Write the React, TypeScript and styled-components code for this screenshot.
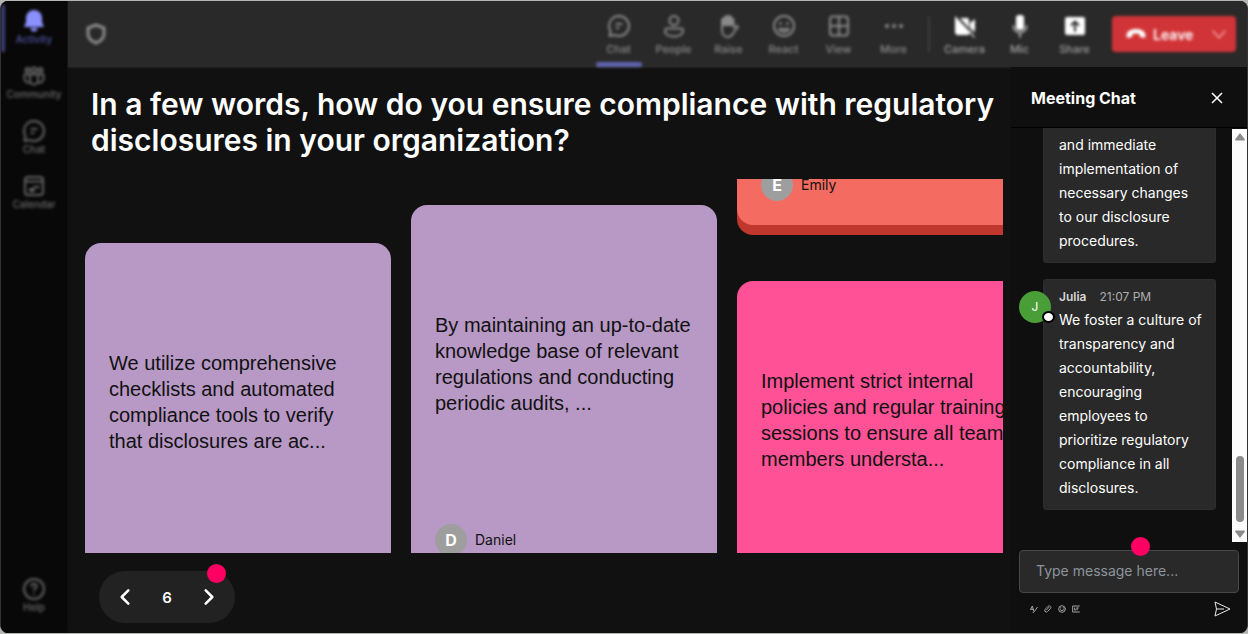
import React from "react";
import styled, { createGlobalStyle } from "styled-components";

const GlobalStyle = createGlobalStyle`
  *, *::before, *::after { box-sizing: border-box; }
  body {
    margin: 0;
    background: #b4b6b4;
    font-family: Inter, "Liberation Sans", sans-serif;
    color: #fff;
  }
  button, input { font: inherit; color: inherit; }
  button { border: 0; padding: 0; background: none; cursor: pointer; }
  h1, h2, p { margin: 0; }
  svg { display: block; flex: none; }
`;

const Shell = styled.div`
  display: flex;
  height: calc(100vh - 2px);
  min-height: 480px;
  margin: 1px 0;
  border: solid #333;
  border-width: 0 1px;
  border-radius: 8px;
  overflow: hidden;
  background: #111;
`;

/* ---------- left rail ---------- */

const Rail = styled.nav`
  flex: none;
  width: 66px;
  display: flex;
  flex-direction: column;
  padding: 4px 0 5px;
  background: #080808;
  box-shadow: 0 0 3px #080808;
`;

const RailButton = styled.button<{ $active?: boolean }>`
  position: relative;
  height: 55px;
  display: flex;
  flex-direction: column;
  align-items: center;
  padding-top: 4px;
  font-size: 10px;
  line-height: 12px;
  font-weight: 500;
  color: ${(p) => (p.$active ? "#5154a8" : "#6c6c6c")};
  filter: blur(1.4px);
  svg { color: ${(p) => (p.$active ? "#8b90ff" : "#646464")}; }
  &::before {
    content: "";
    position: absolute;
    left: 0;
    top: 0;
    width: 4px;
    height: 47px;
    background: ${(p) => (p.$active ? "#3d3e78" : "transparent")};
  }
`;

const Spacer = styled.div`
  flex: 1;
`;

/* ---------- top bar ---------- */

const Main = styled.div`
  flex: 1;
  min-width: 0;
  display: flex;
  flex-direction: column;
`;

const TopBar = styled.header`
  flex: none;
  height: 66px;
  display: flex;
  align-items: center;
  margin-left: 1px;
  padding: 0 11px 0 16px;
  background: #292929;
  box-shadow: 0 1px 2px #222;
`;

const Soft = styled.div`
  display: flex;
  align-items: center;
  color: #8c8c8c;
  filter: blur(1.4px);
`;

const ToolButton = styled.button<{ $bright?: boolean; $active?: boolean }>`
  width: 55px;
  height: 66px;
  display: flex;
  flex-direction: column;
  align-items: center;
  padding-top: 13px;
  gap: 4px;
  font-size: 11px;
  line-height: 14px;
  font-weight: 500;
  color: ${(p) => (p.$bright ? "#a0a0a0" : "#8a8a8a")};
  svg { color: ${(p) => (p.$bright ? "#ffffff" : "#8a8a8a")}; }
  &::after {
    content: "";
    width: 46px;
    height: 5px;
    margin-top: 2px;
    border-radius: 2px;
    background: ${(p) => (p.$active ? "#6264b0" : "transparent")};
  }
`;

const Divider = styled.span`
  width: 2px;
  height: 36px;
  margin: 0 7px;
  background: #3f3f3f;
`;

const LeaveGroup = styled.div`
  display: flex;
  height: 36px;
  margin-left: 10px;
  border-radius: 4px;
  background: #d13438;
  color: #fff;
`;

const LeaveButton = styled.button`
  display: flex;
  align-items: center;
  gap: 7px;
  width: 90px;
  padding-left: 14px;
  font-size: 14px;
  font-weight: 600;
`;

const LeaveMenu = styled.button`
  width: 34px;
  display: flex;
  align-items: center;
  justify-content: center;
  color: #f0a4a6;
`;

/* ---------- stage ---------- */

const Body = styled.div`
  flex: 1;
  min-height: 0;
  display: flex;
`;

const Stage = styled.main`
  flex: 1;
  min-width: 0;
  display: flex;
  flex-direction: column;
  padding: 19px 8px 10px 18px;
`;

const Question = styled.h1`
  padding-left: 6px;
  font-size: 30px;
  line-height: 36px;
  font-weight: 600;
`;

const Board = styled.section`
  flex: 1;
  min-height: 0;
  display: flex;
  gap: 20px;
  margin-top: 21px;
  overflow: hidden;
`;

const Column = styled.div<{ $shift: number }>`
  flex: none;
  width: 306px;
  display: flex;
  flex-direction: column;
  gap: 56px;
  margin-top: ${(p) => p.$shift}px;
`;

const Card = styled.article<{ $face: string; $edge: string; $height: number }>`
  flex: none;
  height: ${(p) => p.$height}px;
  display: flex;
  flex-direction: column;
  padding: 24px;
  border-radius: 16px;
  background: ${(p) => p.$face};
  box-shadow: 0 10px 0 ${(p) => p.$edge};
  color: #111;
`;

const CardText = styled.p`
  flex: 1;
  display: flex;
  align-items: center;
  padding-bottom: 26px;
  font-family: "Liberation Sans", Arial, sans-serif;
  font-size: 20px;
  line-height: 26px;
`;

const Author = styled.footer`
  display: flex;
  align-items: center;
  gap: 8px;
  font-size: 14px;
  line-height: 16px;
`;

const Initial = styled.span`
  width: 32px;
  height: 32px;
  display: flex;
  align-items: center;
  justify-content: center;
  border-radius: 50%;
  background: #9e9e9e;
  color: #fff;
  font-size: 16px;
  font-weight: 700;
`;

const Pager = styled.div`
  position: relative;
  align-self: flex-start;
  display: flex;
  align-items: center;
  justify-content: space-between;
  width: 136px;
  height: 52px;
  margin: 18px 0 0 14px;
  padding: 0 16px;
  border-radius: 26px;
  background: #222;
  font-size: 15px;
  font-weight: 600;
`;

const Hotspot = styled.span<{ $top: number; $right: number }>`
  position: absolute;
  top: ${(p) => p.$top}px;
  right: ${(p) => p.$right}px;
  width: 19px;
  height: 19px;
  border-radius: 50%;
  background: #ff0062;
`;

/* ---------- chat ---------- */

const Chat = styled.aside`
  flex: none;
  width: 236px;
  display: flex;
  flex-direction: column;
  background: #0f0f0f;
`;

const ChatHeader = styled.div`
  flex: none;
  height: 61px;
  display: flex;
  align-items: center;
  justify-content: space-between;
  padding: 2px 24px 0 20px;
  border-bottom: 1px solid #000;
`;

const ChatTitle = styled.h2`
  font-size: 16px;
  line-height: 24px;
  font-weight: 700;
`;

const ChatBody = styled.div`
  flex: 1;
  min-height: 0;
  display: flex;
`;

const Messages = styled.div`
  flex: 1;
  min-width: 0;
  display: flex;
  flex-direction: column;
  justify-content: flex-end;
  gap: 16px;
  padding: 0 16px 32px 32px;
  overflow: hidden;
`;

const Bubble = styled.div`
  position: relative;
  flex: none;
  padding: 7px 12px 10px 16px;
  border-radius: 4px;
  background: #292929;
  box-shadow: inset 0 0 0 1px #2d2d2d;
  font-size: 14px;
  line-height: 24px;
`;

const Meta = styled.div`
  display: flex;
  gap: 13px;
  line-height: 22px;
  font-size: 12px;
  color: #adadad;
  strong { font-weight: 600; color: #d6d6d6; }
`;

const Avatar = styled.span`
  position: absolute;
  left: -24px;
  top: 12px;
  width: 32px;
  height: 32px;
  display: flex;
  align-items: center;
  justify-content: center;
  border-radius: 50%;
  background: #4a9e38;
  font-size: 12px;
  &::after {
    content: "";
    position: absolute;
    right: -4px;
    bottom: 0;
    width: 13px;
    height: 12px;
    border: 2px solid #000;
    border-radius: 50%;
    background: #fff;
  }
`;

const ScrollTrack = styled.div`
  flex: none;
  width: 15px;
  display: flex;
  flex-direction: column;
  align-items: center;
  justify-content: space-between;
  margin-top: 1px;
  padding: 4px 0;
  background: #fcfcfc;
  color: #8b8b8b;
`;

const ScrollThumb = styled.div`
  width: 8px;
  height: 66px;
  margin: auto 0 8px;
  border-radius: 4px;
  background: #8b8b8b;
`;

const Composer = styled.form`
  position: relative;
  flex: none;
  padding: 8px 8px 16px;
`;

const MessageInput = styled.input`
  display: block;
  width: 100%;
  height: 43px;
  padding: 0 16px 2px;
  border: 1px solid #474747;
  border-radius: 4px;
  outline: 0;
  background: #292929;
  font-size: 14px;
  &::placeholder { color: #8d949c; opacity: 1; }
`;

const Tools = styled.div`
  display: flex;
  align-items: center;
  gap: 6px;
  padding: 8px 8px 0 11px;
  color: #a3a3a3;
`;

const SendButton = styled.button`
  margin-left: auto;
  color: #e8e8e8;
`;

/* ---------- icons ---------- */

type IconProps = { size?: number; children: React.ReactNode; width?: number };

const Icon = ({ size = 24, width = 2, children }: IconProps) => (
  <svg
    width={size}
    height={size}
    viewBox="0 0 24 24"
    fill="none"
    stroke="currentColor"
    strokeWidth={width}
    strokeLinecap="round"
    strokeLinejoin="round"
    aria-hidden="true"
  >
    {children}
  </svg>
);

const BellIcon = () => (
  <Icon>
    <path d="M12 1a8 8 0 0 0-8 8v4l-2 5h20l-2-5V9a8 8 0 0 0-8-8z" fill="currentColor" stroke="none" />
    <path d="M8.500 19a3.500 3.500 0 0 0 7 0z" fill="currentColor" stroke="none" />
  </Icon>
);
const CommunityIcon = () => (
  <Icon>
    <circle cx="12" cy="6" r="2.500" />
    <circle cx="5.500" cy="6" r="2" />
    <circle cx="18.500" cy="6" r="2" />
    <path d="M8 10.500h8v6a4 4 0 0 1-8 0zM8 10.500H2.500v4a4 4 0 0 0 5 4M16 10.500h5.500v4a4 4 0 0 1-5 4" />
  </Icon>
);
const ChatIcon = () => (
  <Icon>
    <path d="M12 2a10 10 0 0 1 0 20 10 10 0 0 1-4.600-1.100L2.500 22l1-4.800A10 10 0 0 1 12 2z" />
    <path d="M9.500 10h5M9.500 14h2" />
  </Icon>
);
const CalendarIcon = () => (
  <Icon>
    <rect x="3" y="3" width="18" height="18" rx="3" />
    <path d="M3 7.500h18M8 15h3l2-2h4M8 17h4" />
  </Icon>
);
const HelpIcon = () => (
  <Icon>
    <circle cx="12" cy="12" r="10" />
    <path d="M9.500 9a2.500 2.500 0 1 1 3.500 2.500c-.7.400-1 .9-1 1.800M12 17v.1" />
  </Icon>
);
const PeopleIcon = () => (
  <Icon>
    <circle cx="12" cy="6.500" r="4.500" />
    <path d="M5 14.500h14a2 2 0 0 1 2 2c0 4-4 6-9 6s-9-2-9-6a2 2 0 0 1 2-2z" />
  </Icon>
);
const RaiseIcon = () => (
  <Icon>
    <path d="M5 11V6a1.500 1.500 0 0 1 3 0V3.500a1.500 1.500 0 0 1 3 0 1.500 1.500 0 0 1 3 0V5a1.500 1.500 0 0 1 2.500 1v5z" fill="currentColor" />
    <path d="M5 10v6c0 4 2 7 5.500 7 3.500 0 5-2 6.500-5l4-5c-1-2-3-1-4.500 1" />
  </Icon>
);
const ReactIcon = () => (
  <Icon>
    <circle cx="12" cy="12" r="10" />
    <path d="M8.500 9.500v.1M15.500 9.500v.1" strokeWidth={3} />
    <path d="M7 15c2.500 4 7.500 4 10 0z" />
  </Icon>
);
const ViewIcon = () => (
  <Icon>
    <rect x="3" y="2.500" width="18" height="19" rx="3" />
    <path d="M3 12h18M12 3v18" />
  </Icon>
);
const MoreIcon = () => (
  <Icon width={4}>
    <path d="M5 12h.1M12 12h.1M19 12h.1" />
  </Icon>
);
const CameraOffIcon = () => (
  <Icon>
    <path d="M7 4h7a2 2 0 0 1 2 2v9l6 6M2 2l15 16a3 3 0 0 1-2 3H5a3 3 0 0 1-3-3V3z" fill="currentColor" stroke="none" />
    <path d="M17 9l5-4v13l-5-4z" fill="currentColor" stroke="none" />
    <path d="M17 18l4 5" opacity=".6" />
  </Icon>
);
const MicIcon = () => (
  <Icon>
    <rect x="8" y="1" width="8" height="15" rx="3" fill="currentColor" stroke="none" />
    <path d="M5.500 12a6.500 6.500 0 0 0 13 0M12 19v4" opacity=".6" />
  </Icon>
);
const ShareIcon = () => (
  <Icon>
    <rect x="2" y="3" width="20" height="18" rx="2" fill="currentColor" stroke="none" />
    <path d="M12 17V8M8.500 11 12 7.500l3.500 3.500" stroke="#292929" />
  </Icon>
);
const ShieldIcon = () => (
  <Icon width={3}>
    <path d="M12 3l8 3v6c0 4-3 7-8 9-5-2-8-5-8-9V6z" />
  </Icon>
);

const railItems = [
  { label: "Activity", icon: <BellIcon />, active: true },
  { label: "Community", icon: <CommunityIcon /> },
  { label: "Chat", icon: <ChatIcon /> },
  { label: "Calendar", icon: <CalendarIcon /> },
];

const tools = [
  { label: "Chat", icon: <ChatIcon />, active: true },
  { label: "People", icon: <PeopleIcon /> },
  { label: "Raise", icon: <RaiseIcon /> },
  { label: "React", icon: <ReactIcon /> },
  { label: "View", icon: <ViewIcon /> },
  { label: "More", icon: <MoreIcon /> },
];

const devices = [
  { label: "Camera", icon: <CameraOffIcon /> },
  { label: "Mic", icon: <MicIcon /> },
  { label: "Share", icon: <ShareIcon /> },
];

type Answer = { text?: string; author?: string; face: string; edge: string; height: number };

const columns: { shift: number; answers: Answer[] }[] = [
  {
    shift: 64,
    answers: [
      {
        text: "We utilize comprehensive checklists and automated compliance tools to verify that disclosures are ac...",
        face: "#b899c5",
        edge: "#8e6f9c",
        height: 375,
      },
    ],
  },
  {
    shift: 26,
    answers: [
      {
        text: "By maintaining an up-to-date knowledge base of relevant regulations and conducting periodic audits, ...",
        author: "Daniel",
        face: "#b899c5",
        edge: "#8e6f9c",
        height: 375,
      },
    ],
  },
  {
    shift: -289,
    answers: [
      { author: "Emily", face: "#f46c61", edge: "#c0372d", height: 335 },
      {
        text: "Implement strict internal policies and regular training sessions to ensure all team members understa...",
        face: "#ff5296",
        edge: "#c4306a",
        height: 335,
      },
    ],
  },
];

export default function App() {
  return (
    <>
      <GlobalStyle />
      <Shell>
        <Rail aria-label="Apps">
          {railItems.map((item) => (
            <RailButton key={item.label} $active={item.active}>
              {item.icon}
              {item.label}
            </RailButton>
          ))}
          <Spacer />
          <RailButton>
            <HelpIcon />
            Help
          </RailButton>
        </Rail>

        <Main>
          <TopBar>
            <Soft>
              <ShieldIcon />
            </Soft>
            <Spacer />
            <Soft>
              {tools.map((tool) => (
                <ToolButton key={tool.label} $active={tool.active}>
                  {tool.icon}
                  {tool.label}
                </ToolButton>
              ))}
              <Divider />
              {devices.map((tool) => (
                <ToolButton key={tool.label} $bright>
                  {tool.icon}
                  {tool.label}
                </ToolButton>
              ))}
              <LeaveGroup>
                <LeaveButton>
                  <svg width="20" height="14" viewBox="0 0 20 14" fill="currentColor" aria-hidden="true">
                    <path d="M10 2c5 0 9 2 9.500 6 .2 2-.5 3-2 2.700l-2.500-.5c-1-.2-1.500-1-1.400-2L13.500 7c-2-.8-5-.8-7 0l-.1 1.200c.1 1-.4 1.800-1.400 2l-2.500.5C1 11 .3 10 .5 8 1 4 5 2 10 2z" />
                  </svg>
                  Leave
                </LeaveButton>
                <LeaveMenu aria-label="Leave options">
                  <Icon size={18}>
                    <path d="M4 8l8 9 8-9" />
                  </Icon>
                </LeaveMenu>
              </LeaveGroup>
            </Soft>
          </TopBar>

          <Body>
            <Stage>
              <Question>
                In a few words, how do you ensure compliance with regulatory disclosures in your organization?
              </Question>
              <Board>
                {columns.map((column, i) => (
                  <Column key={i} $shift={column.shift}>
                    {column.answers.map((a, j) => (
                      <Card key={j} $face={a.face} $edge={a.edge} $height={a.height}>
                        <CardText>{a.text}</CardText>
                        <Author>
                          <Initial>{a.author?.[0]}</Initial>
                          {a.author}
                        </Author>
                      </Card>
                    ))}
                  </Column>
                ))}
              </Board>
              <Pager>
                <button aria-label="Previous">
                  <Icon size={20} width={3}>
                    <path d="M16 4 8 12l8 8" />
                  </Icon>
                </button>
                6
                <button aria-label="Next">
                  <Icon size={20} width={3}>
                    <path d="M8 4l8 8-8 8" />
                  </Icon>
                </button>
                <Hotspot $top={-7} $right={9} />
              </Pager>
            </Stage>

            <Chat>
              <ChatHeader>
                <ChatTitle>Meeting Chat</ChatTitle>
                <button aria-label="Close chat">
                  <svg width="12" height="12" viewBox="0 0 12 12" stroke="currentColor" strokeWidth="1.500" aria-hidden="true">
                    <path d="M1 1l10 10M11 1 1 11" />
                  </svg>
                </button>
              </ChatHeader>
              <ChatBody>
                <Messages>
                  <Bubble>
                    <Meta>&nbsp;</Meta>
                    <p>and immediate implementation of necessary changes to our disclosure procedures.</p>
                  </Bubble>
                  <Bubble>
                    <Avatar>J</Avatar>
                    <Meta>
                      <strong>Julia</strong>
                      <span>21:07 PM</span>
                    </Meta>
                    <p>
                      We foster a culture of transparency and accountability, encouraging employees to prioritize
                      regulatory compliance in all disclosures.
                    </p>
                  </Bubble>
                </Messages>
                <ScrollTrack>
                  <svg width="10" height="8" viewBox="0 0 10 8" fill="currentColor" aria-hidden="true">
                    <path d="M5 0l5 6.500q0 1-1 1H1q-1 0-1-1z" />
                  </svg>
                  <ScrollThumb />
                  <svg width="10" height="8" viewBox="0 0 10 8" fill="currentColor" aria-hidden="true">
                    <path d="M5 8l5-6.500q0-1-1-1H1q-1 0-1 1z" />
                  </svg>
                </ScrollTrack>
              </ChatBody>
              <Composer onSubmit={(e) => e.preventDefault()}>
                <MessageInput aria-label="Message" placeholder="Type message here..." />
                <Hotspot $top={-5} $right={97} />
                <Tools>
                  <button type="button" aria-label="Format">
                    <Icon size={8} width={3}>
                      <path d="M2 13 7 3l4 14M2 13h8M22 7 12 21l-3 1" />
                    </Icon>
                  </button>
                  <button type="button" aria-label="Attach">
                    <Icon size={8} width={3}>
                      <path d="M8 14l7-7M4 20c-4-3-1-7 2-10l6-6c4-4 11 1 8 6l-9 9c-3 3-6 3-7 1z" />
                    </Icon>
                  </button>
                  <button type="button" aria-label="Emoji">
                    <Icon size={8} width={3}>
                      <circle cx="12" cy="12" r="10" />
                      <path d="M8 8v1M16 8v1M7 14c3 4 7 4 10 0" />
                    </Icon>
                  </button>
                  <button type="button" aria-label="GIF">
                    <Icon size={8} width={3}>
                      <path d="M22 3H2v18h20M8 9v6h3M15 9v6M15 9h4" />
                    </Icon>
                  </button>
                  <SendButton aria-label="Send">
                    <svg width="17" height="16" viewBox="0 0 17 16" fill="none" stroke="currentColor" aria-hidden="true">
                      <path d="M1 1l15 7L1 15l1.500-7zM2.500 8H10" strokeLinejoin="round" />
                    </svg>
                  </SendButton>
                </Tools>
              </Composer>
            </Chat>
          </Body>
        </Main>
      </Shell>
    </>
  );
}
